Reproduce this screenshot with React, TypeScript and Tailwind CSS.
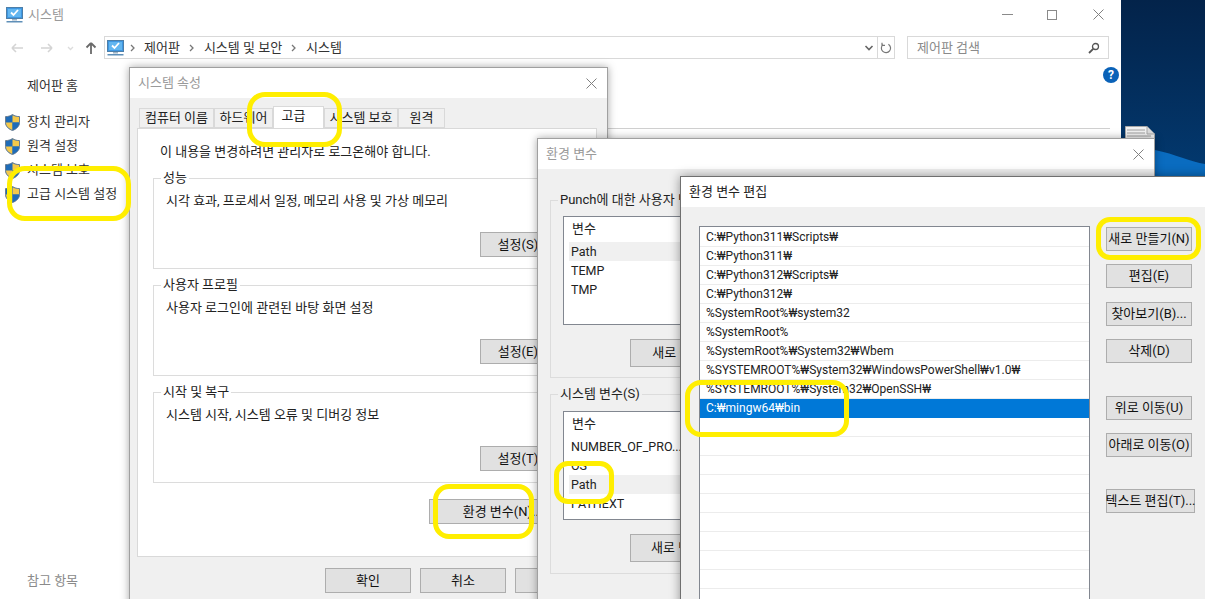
import type { ReactNode } from "react";

const sidebarLinks = ["장치 관리자", "원격 설정", "시스템 보호", "고급 시스템 설정"];
const tabs = [
  { label: "컴퓨터 이름", width: "w-[75px]" },
  { label: "하드웨어", width: "w-[59px]" },
  { label: "고급", width: "w-[51px]", active: true },
  { label: "시스템 보호", width: "w-[74px]" },
  { label: "원격", width: "w-[47px]" },
];
const crumbs = ["제어판", "시스템 및 보안", "시스템"];
const pathEntries = [
  "C:₩Python311₩Scripts₩",
  "C:₩Python311₩",
  "C:₩Python312₩Scripts₩",
  "C:₩Python312₩",
  "%SystemRoot%₩system32",
  "%SystemRoot%",
  "%SystemRoot%₩System32₩Wbem",
  "%SYSTEMROOT%₩System32₩WindowsPowerShell₩v1.0₩",
  "%SYSTEMROOT%₩System32₩OpenSSH₩",
  "C:₩mingw64₩bin",
  "", "", "", "", "", "", "", "", "", "",
];

const MonitorIcon = () => (
  <svg width="17" height="16" viewBox="0 0 17 16" className="shrink-0">
    <rect x="0.5" y="0.5" width="16" height="11" fill="#3f97e2" stroke="#4d7fa8" />
    <rect x="2" y="2" width="13" height="8" fill="#62b6f0" />
    <path d="M5 5.5l2.5 2.5L12 3" fill="none" stroke="#fff" strokeWidth="1.8" />
    <rect x="6" y="12" width="5" height="1.5" fill="#9fb4c6" />
    <rect x="0.5" y="14" width="16" height="1.5" fill="#5f8fb8" />
  </svg>
);

const ShieldIcon = () => (
  <svg width="15" height="17" viewBox="0 0 15 17" className="shrink-0">
    <path d="M7.5 0.5C5.5 2 3 2.6 0.5 2.6V8.5c0 3.8 3 6.6 7 8 4-1.4 7-4.2 7-8V2.6C12 2.6 9.5 2 7.5 0.5z" fill="#2a6fb5" stroke="#6b7d8f" />
    <path d="M7.5 1.2V8.5H1V3C3.4 3 5.6 2.3 7.5 1.2z" fill="#1f6cb8" />
    <path d="M7.5 1.2C9.4 2.3 11.6 3 14 3V8.5H7.5z" fill="#f4c84a" />
    <path d="M1 8.5h6.5V16C4 14.8 1 12.2 1 8.5z" fill="#f4c84a" />
    <path d="M7.5 8.5H14c0 3.7-3 6.3-6.5 7.5z" fill="#1f6cb8" />
  </svg>
);

const CloseIcon = ({ color = "#808080" }: { color?: string }) => (
  <svg width="11" height="11" viewBox="0 0 11 11">
    <path d="M0.5 0.5l10 10M10.5 0.5l-10 10" stroke={color} fill="none" />
  </svg>
);

const CrumbArrow = ({ className }: { className: string }) => (
  <svg width="5" height="8" viewBox="0 0 5 8" className={`shrink-0 ${className}`}>
    <path d="M1 1l3 3-3 3" stroke="#777" strokeWidth="1.3" fill="none" />
  </svg>
);

const Button = ({ children, className }: { children: ReactNode; className: string }) => (
  <div className={`flex items-center justify-center whitespace-nowrap border border-[#adadad] bg-[#e1e1e1] text-[13px] text-[#111] ${className}`}>
    {children}
  </div>
);

const GroupBox = ({ title, height, className, children }: { title: string; height: string; className: string; children: ReactNode }) => (
  <div className={`relative border border-[#dcdcdc] ${height} ${className}`}>
    <span className="absolute -top-[10px] left-[7px] bg-inherit px-[2px] text-[13px] leading-[18px] text-[#222]">{title}</span>
    {children}
  </div>
);

const SettingGroup = ({ title, text, action, className }: { title: string; text: string; action: string; className: string }) => (
  <GroupBox title={title} height="h-[91px]" className={`w-[437px] bg-white ${className}`}>
    <p className="pl-[12px] pt-[13px] text-[13px] leading-[18px] text-[#222]">{text}</p>
    <div className="mt-[22px] flex justify-end pr-[23px]">
      <Button className="h-[25px] w-[86px]">{action}</Button>
    </div>
  </GroupBox>
);

const VarList = ({ rows, selected }: { rows: string[]; selected: string }) => (
  <div className="h-[109px] w-[180px] border border-[#828790] bg-white pl-[5px] pt-px text-[12.5px] text-[#222]">
    <div className="h-[24px] pl-[3px] text-[13px] leading-[22px]">변수</div>
    {rows.map((row) => (
      <div key={row} className={`h-[19px] whitespace-nowrap pl-[2px] leading-[19px] ${row === selected ? "bg-[#f0f0f0]" : ""}`}>
        {row}
      </div>
    ))}
  </div>
);

const Marker = ({ className }: { className: string }) => (
  <div className={`absolute border-[5px] border-[#ffee00] ${className}`} />
);

export default function App() {
  return (
    <div className="relative h-[599px] w-[1205px] overflow-hidden bg-gradient-to-b from-[#03234a] via-[#004a8c] to-[#0064b8] font-['Roboto','Noto_Sans_CJK_KR',sans-serif]">
      {/* explorer window */}
      <div className="h-[599px] w-[1121px] bg-white">
        <div className="flex h-[32px] items-center pb-[3px] pl-[6px]">
          <MonitorIcon />
          <span className="ml-[5px] text-[13px] text-[#9a9a9a]">시스템</span>
          <div className="ml-auto flex items-center pr-[17px]">
            <div className="mr-[34px] h-px w-[11px] bg-[#8a8a8a]" />
            <div className="mr-[36px] h-[10px] w-[10px] border border-[#8a8a8a]" />
            <CloseIcon />
          </div>
        </div>
        <div className="flex h-[31px] items-center pl-[11px]">
          <svg width="90" height="14" viewBox="0 0 90 14" className="shrink-0">
            <path d="M1 7h11M1 7l4-4M1 7l4 4" stroke="#d4d4d4" strokeWidth="1.6" fill="none" />
            <path d="M30 7h11M41 7l-4-4M41 7l-4 4" stroke="#d4d4d4" strokeWidth="1.6" fill="none" />
            <path d="M57 6l2.5 2.5L62 6" stroke="#dcdcdc" strokeWidth="1.3" fill="none" />
            <path d="M80 13V2M80 2l-4.5 4.5M80 2l4.5 4.5" stroke="#6a6a6a" strokeWidth="1.8" fill="none" />
          </svg>
          <div className="ml-[3px] flex h-[23px] w-[791px] items-center border border-[#d9d9d9] pl-[2px] text-[13px] text-[#333]">
            <MonitorIcon />
            <CrumbArrow className="ml-[6px] mr-[9px]" />
            {crumbs.map((crumb, index) => (
              <div key={crumb} className="flex items-center">
                <span className="whitespace-nowrap">{crumb}</span>
                {index < crumbs.length - 1 && <CrumbArrow className="ml-[9px] mr-[10px]" />}
              </div>
            ))}
            <svg width="10" height="8" viewBox="0 0 10 8" className="ml-auto mr-[3px]">
              <path d="M1.5 2l3.5 3.5L8.5 2" stroke="#666" strokeWidth="1.6" fill="none" />
            </svg>
            <div className="flex h-full w-[17px] items-center justify-center border-l border-[#d9d9d9]">
              <svg width="12" height="12" viewBox="0 0 12 12">
                <path d="M3 2.6A4.6 4.6 0 1 0 8.4 2.2M2 0.8V3.4H5" stroke="#777" strokeWidth="1.2" fill="none" />
              </svg>
            </div>
          </div>
          <div className="ml-[12px] flex h-[23px] w-[202px] items-center justify-between border border-[#d9d9d9] pl-[9px] pr-[8px] text-[13px] text-[#8a8a8a]">
            <span>제어판 검색</span>
            <svg width="12" height="12" viewBox="0 0 12 12">
              <circle cx="7.5" cy="4.5" r="3" stroke="#555" strokeWidth="1.3" fill="none" />
              <path d="M5.2 6.8L1 11" stroke="#555" strokeWidth="1.8" />
            </svg>
          </div>
        </div>
        <div className="flex justify-end pr-[2px] pt-[4px]">
          <div className="flex h-[16px] w-[16px] items-center justify-center rounded-full bg-[#0a62b8] text-[12px] font-bold text-white">?</div>
        </div>
        <div className="ml-[608px] mr-[11px] mt-[45px] h-px bg-[#d0d0d0]" />
      </div>

      {/* sidebar */}
      <aside className="absolute left-0 top-[77px] text-[13px] text-[#333]">
        <div className="pl-[27px] leading-[18px]">제어판 홈</div>
        <ul className="mt-[18px] flex flex-col gap-[6px] pl-[5px]">
          {sidebarLinks.map((link) => (
            <li key={link} className="flex h-[18px] items-center gap-[7px]">
              <ShieldIcon />
              <span>{link}</span>
            </li>
          ))}
        </ul>
      </aside>
      <div className="absolute left-[27px] top-[572px] text-[13px] leading-[18px] text-[#8a8a8a]">참고 항목</div>

      {/* desktop file */}
      <svg width="32" height="46" viewBox="0 0 32 46" className="absolute left-[1124px] top-[126px]">
        <path d="M1.5 0.5H23L30.5 8V45.5H1.5z" fill="#f2f2f2" stroke="#a8a8a8" />
        <path d="M23 0.5V8H30.5" fill="#dcdcdc" stroke="#a8a8a8" />
        <path d="M3 4h18M3 7h18M3 10h24" stroke="#a0a0a0" />
      </svg>
      <svg width="50" height="30" viewBox="0 0 50 30" className="absolute left-[1155px] top-[150px]">
        <path d="M0 0C20 4 36 12 50 14V30H0z" fill="#0a6cc0" />
      </svg>

      {/* system properties */}
      <section className="absolute left-[129px] top-[67px] h-[560px] w-[479px] border border-[#a0a0a0] bg-[#f0f0f0] shadow-[0_0_8px_rgba(0,0,0,0.35)]">
        <div className="flex h-[30px] items-center justify-between bg-white pl-[8px] pr-[10px] text-[13px] text-[#9a9a9a]">
          <span>시스템 속성</span>
          <CloseIcon />
        </div>
        <div className="flex h-[30px] items-end pl-[9px]">
          {tabs.map((tab) => (
            <div
              key={tab.label}
              className={`flex items-center justify-center border border-[#d9d9d9] text-[13px] text-[#222] ${tab.width} ${
                tab.active ? "h-[22px] border-b-0 bg-white pb-[3px] pr-[10px]" : "h-[20px] bg-[#f0f0f0]"
              }`}
            >
              {tab.label}
            </div>
          ))}
        </div>
        <div className="ml-[7px] h-[429px] w-[460px] border border-[#d9d9d9] bg-white pl-[15px]">
          <p className="pl-[7px] pt-[14px] text-[13px] leading-[18px] text-[#222]">이 내용을 변경하려면 관리자로 로그온해야 합니다.</p>
          <SettingGroup className="mt-[17px]" title="성능" text="시각 효과, 프로세서 일정, 메모리 사용 및 가상 메모리" action="설정(S)..." />
          <SettingGroup className="mt-[16px]" title="사용자 프로필" text="사용자 로그인에 관련된 바탕 화면 설정" action="설정(E)..." />
          <SettingGroup className="mt-[16px]" title="시작 및 복구" text="시스템 시작, 시스템 오류 및 디버깅 정보" action="설정(T)..." />
          <div className="mt-[16px] pl-[276px]">
            <Button className="h-[25px] w-[152px] pr-[5px]">환경 변수(N)...</Button>
          </div>
        </div>
        <div className="flex gap-[9px] pl-[195px] pt-[11px]">
          <Button className="h-[25px] w-[86px]">확인</Button>
          <Button className="h-[25px] w-[86px]">취소</Button>
          <Button className="h-[25px] w-[86px]">적용(A)</Button>
        </div>
      </section>

      {/* environment variables */}
      <section className="absolute left-[537px] top-[138px] h-[490px] w-[618px] border border-[#a0a0a0] bg-[#f0f0f0] shadow-[0_0_8px_rgba(0,0,0,0.35)]">
        <div className="flex h-[30px] items-center justify-between bg-white pl-[8px] pr-[10px] text-[13px] text-[#9a9a9a]">
          <span>환경 변수</span>
          <CloseIcon />
        </div>
        <div className="pl-[12px] pt-[31px]">
          <GroupBox title="Punch에 대한 사용자 변수(U)" height="h-[178px]" className="w-[590px] bg-[#f0f0f0] pl-[12px] pt-[15px]">
            <VarList rows={["Path", "TEMP", "TMP"]} selected="Path" />
            <Button className="ml-[67px] mt-[14px] h-[28px] w-[136px]">새로 만들기(N)...</Button>
          </GroupBox>
          <GroupBox title="시스템 변수(S)" height="h-[180px]" className="mt-[16px] w-[590px] bg-[#f0f0f0] pl-[12px] pt-[16px]">
            <VarList rows={["NUMBER_OF_PRO...", "OS", "Path", "PATHEXT"]} selected="Path" />
            <Button className="ml-[67px] mt-[14px] h-[28px] w-[136px]">새로 만들기(W)...</Button>
          </GroupBox>
        </div>
      </section>

      {/* edit environment variable */}
      <section className="absolute left-[680px] top-[176px] h-[440px] w-[560px] border border-[#6f6f6f] bg-[#f0f0f0] shadow-[0_0_10px_rgba(0,0,0,0.4)]">
        <div className="flex h-[30px] items-center bg-white pl-[8px] text-[13px] text-[#222]">
          <span>환경 변수 편집</span>
          <div className="ml-[443px]">
            <CloseIcon color="#111" />
          </div>
        </div>
        <div className="flex pl-[18px] pt-[19px]">
          <div className="h-[400px] w-[391px] border border-[#828790] bg-white pt-px text-[12px] text-[#222]">
            {pathEntries.map((entry, index) => (
              <div
                key={index}
                className={`h-[19px] border-b pl-[6px] leading-[18px] ${
                  index === 9 ? "border-[#0078d7] bg-[#0078d7] text-white" : "border-[#ececec]"
                }`}
              >
                {entry}
              </div>
            ))}
          </div>
          <div className="ml-[16px] flex flex-col items-start">
            <Button className="mt-[1px] h-[24px] w-[86px]">새로 만들기(N)</Button>
            <Button className="mt-[13px] h-[24px] w-[86px]">편집(E)</Button>
            <Button className="mt-[14px] h-[24px] w-[86px]">찾아보기(B)...</Button>
            <Button className="mt-[13px] h-[24px] w-[86px]">삭제(D)</Button>
            <Button className="mt-[33px] h-[24px] w-[86px]">위로 이동(U)</Button>
            <Button className="mt-[13px] h-[24px] w-[86px]">아래로 이동(O)</Button>
            <Button className="mt-[32px] h-[24px] w-[89px]">텍스트 편집(T)...</Button>
          </div>
        </div>
      </section>

      {/* hand drawn highlights */}
      <Marker className="left-[247px] top-[92px] h-[55px] w-[95px] rounded-[18px]" />
      <Marker className="left-[7px] top-[166px] h-[55px] w-[124px] rounded-[18px]" />
      <Marker className="left-[433px] top-[484px] h-[55px] w-[101px] rounded-[16px]" />
      <Marker className="left-[554px] top-[461px] h-[43px] w-[60px] rounded-[14px]" />
      <Marker className="left-[685px] top-[380px] h-[57px] w-[164px] rounded-[16px]" />
      <Marker className="left-[1096px] top-[217px] h-[43px] w-[105px] rounded-[14px]" />
    </div>
  );
}
